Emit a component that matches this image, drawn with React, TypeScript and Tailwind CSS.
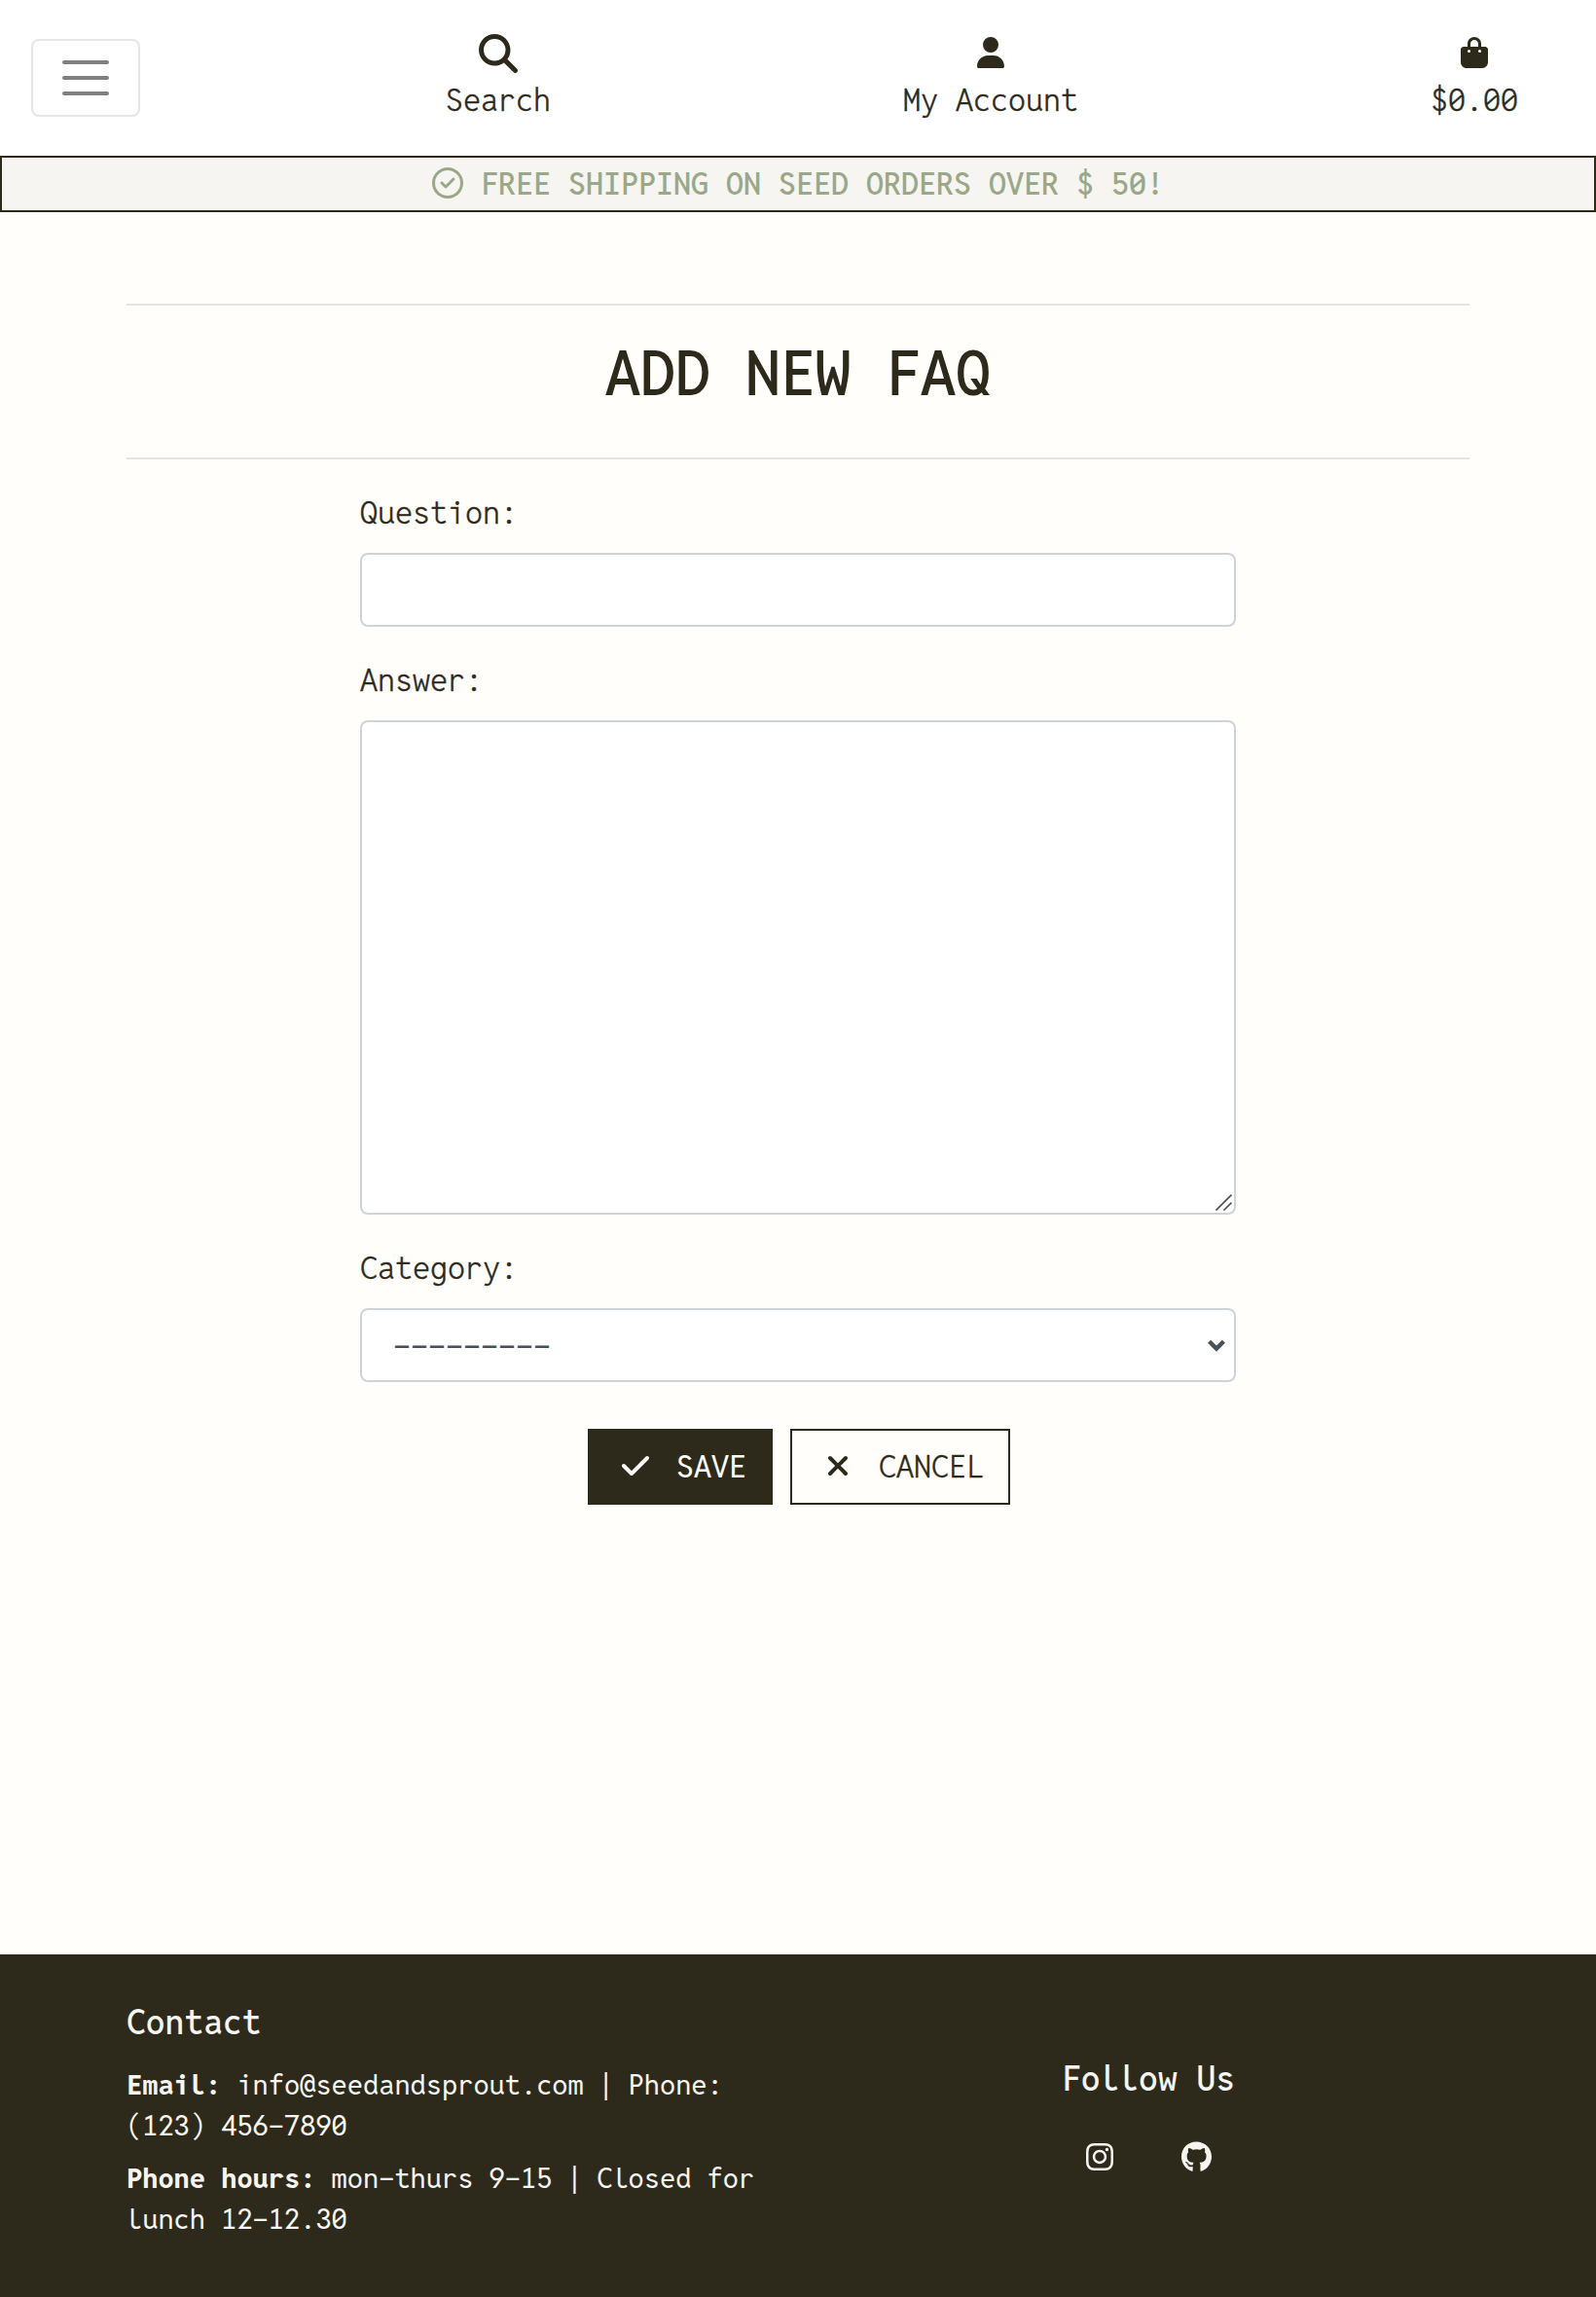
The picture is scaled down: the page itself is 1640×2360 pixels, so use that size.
import type { ReactNode } from "react";
import {
  FaBagShopping,
  FaCheck,
  FaGithub,
  FaInstagram,
  FaMagnifyingGlass,
  FaRegCircleCheck,
  FaUser,
  FaXmark,
} from "react-icons/fa6";

function NavItem({ icon, label }: { icon: ReactNode; label: string }) {
  return (
    <a className="flex flex-col items-center whitespace-pre">
      <span className="flex h-11 items-start">{icon}</span>
      <span className="font-light [-webkit-text-stroke:0.4px_#2d2a1c]">{label}</span>
    </a>
  );
}

function Header() {
  return (
    <header className="flex h-40 bg-white pr-20 pl-8">
      <button
        type="button"
        aria-label="Toggle navigation"
        className="mt-10 flex h-20 w-28 shrink-0 flex-col items-center justify-center gap-3 rounded-lg border-2 border-black/10"
      >
        <span className="h-1 w-12 rounded-full bg-black/50" />
        <span className="h-1 w-12 rounded-full bg-black/50" />
        <span className="h-1 w-12 rounded-full bg-black/50" />
      </button>
      <nav className="ml-[314px] flex flex-1 items-start justify-between pt-[35px]">
        <NavItem icon={<FaMagnifyingGlass className="size-10" />} label="Search" />
        <NavItem icon={<FaUser className="mt-[3px] h-8 w-7" />} label="My Account" />
        <NavItem icon={<FaBagShopping className="mt-[3px] h-8 w-7" />} label="$0.00" />
      </nav>
    </header>
  );
}

function Banner() {
  return (
    <div className="flex h-[58px] items-start justify-center gap-[18px] border-2 border-[#2d2a1c] bg-[#f6f5f1] pt-[3px] font-medium text-[#9ba887]">
      <FaRegCircleCheck className="mt-[7px] size-8" />
      <span>FREE SHIPPING ON SEED ORDERS OVER $ 50!</span>
    </div>
  );
}

function Label({ htmlFor, children }: { htmlFor: string; children: ReactNode }) {
  return (
    <label
      htmlFor={htmlFor}
      className="mt-[31px] mb-[17px] block font-light [-webkit-text-stroke:0.4px_#2d2a1c]"
    >
      {children}
    </label>
  );
}

function FaqForm() {
  return (
    <form className="mx-auto flex w-[900px] flex-col">
      <Label htmlFor="question">Question:</Label>
      <input
        id="question"
        className="block h-[76px] w-full rounded-lg border-2 border-[#ced4da] bg-white px-6"
      />

      <Label htmlFor="answer">Answer:</Label>
      <div className="relative">
        <textarea
          id="answer"
          className="block h-[508px] w-full resize-none rounded-lg border-2 border-[#ced4da] bg-white px-6 py-3"
        />
        <svg
          className="absolute right-1 bottom-1 size-[17px]"
          viewBox="0 0 17 17"
          stroke="#505050"
          strokeWidth="1.6"
        >
          <path d="M0.5 16.5 16.5 0.5M8.5 16.5l8-8" />
        </svg>
      </div>

      <Label htmlFor="category">Category:</Label>
      <div className="relative">
        <select
          id="category"
          className="block h-[76px] w-full appearance-none rounded-lg border-2 border-[#ced4da] bg-white px-8 pt-0.5 text-[#495057]"
        >
          <option>---------</option>
        </select>
        <svg
          className="absolute top-8 right-[11px] h-[13px] w-[18px]"
          viewBox="0 0 18 13"
          fill="none"
          stroke="#495057"
          strokeWidth="4.4"
        >
          <path d="M1.6 2.2 9 9.6l7.4-7.4" />
        </svg>
      </div>

      <div className="mt-12 flex justify-center gap-[18px] pl-0.5">
        <button
          type="submit"
          className="flex h-[78px] w-[190px] items-start justify-between border-2 border-[#2d2a1c] bg-[#2d2a1c] pt-[13px] pr-[25px] pl-[33px] text-[#fffefa]"
        >
          <FaCheck className="mt-[7px] h-8 w-7" />
          <span>SAVE</span>
        </button>
        <button
          type="button"
          className="flex h-[78px] w-[226px] items-start justify-between border-2 border-[#2d2a1c] pt-[13px] pr-[25px] pl-[35px]"
        >
          <FaXmark className="mt-[7px] h-8 w-6" />
          <span className="font-light [-webkit-text-stroke:0.4px_#2d2a1c]">CANCEL</span>
        </button>
      </div>
    </form>
  );
}

function Footer() {
  return (
    <footer className="flex h-[352px] bg-[#2d2a1c] px-[130px] text-[#f6f5f1]">
      <section className="w-[690px] pt-12 text-[28.8px] leading-[42px]">
        <h2 className="text-[35.2px] leading-[42px] font-medium">Contact</h2>
        <p className="mt-[23px]">
          <strong className="font-bold">Email:</strong> info@seedandsprout.com
          <span className="[word-spacing:-1.4px]"> | </span>Phone: (123) 456-7890
        </p>
        <p className="mt-3">
          <strong className="font-bold">Phone hours:</strong> mon-thurs 9-15
          <span className="[word-spacing:-1.4px]"> | </span>Closed for lunch 12-12.30
        </p>
      </section>
      <section className="flex flex-1 flex-col items-center pt-[106px] pl-[30px]">
        <h2 className="text-[35.2px] leading-[42px] font-medium">Follow Us</h2>
        <div className="mt-11 flex gap-[70px]">
          <FaInstagram className="h-8 w-7" />
          <FaGithub className="h-8 w-[31px]" />
        </div>
      </section>
    </footer>
  );
}

export default function App() {
  return (
    <div className="flex h-[2360px] w-[1640px] flex-col bg-[#fffefa] font-['Reddit_Mono',Inconsolata,monospace] text-[32px] leading-[48px] text-[#2d2a1c]">
      <Header />
      <Banner />
      <main className="flex-1 px-[130px] pt-[94px]">
        <h1 className="h-[160px] border-y-2 border-[#e4e3e0] pt-[31px] text-center text-[64px] leading-[77px] font-medium">
          ADD NEW FAQ
        </h1>
        <FaqForm />
      </main>
      <Footer />
    </div>
  );
}
